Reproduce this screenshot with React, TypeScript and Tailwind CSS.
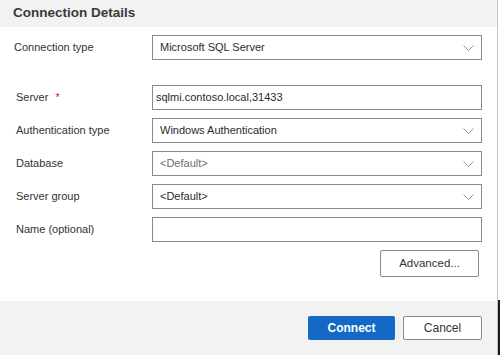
type Field = {
  label: string;
  value: string;
  select?: boolean;
  required?: boolean;
  muted?: boolean;
};

const fields: Field[] = [
  { label: 'Server', value: 'sqlmi.contoso.local,31433', required: true },
  { label: 'Authentication type', value: 'Windows Authentication', select: true },
  { label: 'Database', value: '<Default>', select: true, muted: true },
  { label: 'Server group', value: '<Default>', select: true },
  { label: 'Name (optional)', value: '' },
];

// thin dropdown caret
const Chevron = () => (
  <svg width="11" height="6" viewBox="0 0 11 6" className="mr-[7px]">
    <path d="M0.5 0.5 L5.5 5.5 L10.5 0.5" fill="none" stroke="#8c8c8c" strokeWidth="0.9" />
  </svg>
);

const Box = ({ value, select, muted }: { value: string; select?: boolean; muted?: boolean }) => (
  <div className="flex-1 h-[25px] border border-[#8a8a8a] bg-white flex items-center justify-between">
    <span className={`text-[11px] ${select ? 'pl-[7px]' : 'pl-[3px]'} ${muted ? 'text-[#6b6b6b]' : 'text-[#2b2b2b]'}`}>
      {value}
    </span>
    {select && <Chevron />}
  </div>
);

export default function App() {
  return (
    <div className="flex w-[500px] h-[355px] bg-white" style={{ fontFamily: '"Liberation Sans", Arial, sans-serif' }}>
      {/* dialog */}
      <div className="w-[497px] h-full flex flex-col">
        <div className="h-[27px] bg-[#f2f2f2] flex items-center pl-[13px]">
          <h2 className="text-[13.5px] font-bold text-[#3a3a3a]">Connection Details</h2>
        </div>

        <div className="flex-1 bg-white pl-[14px] pr-[15px] pt-[8px]">
          <div className="flex items-center">
            <div className="w-[138px] text-[11px] text-[#333]">Connection type</div>
            <Box value="Microsoft SQL Server" select />
          </div>

          <div className="flex flex-col gap-[8px] mt-[25px]">
            {fields.map(f => (
              <div key={f.label} className="flex items-center">
                <div className="w-[138px] pl-[2px] text-[11px] text-[#333]">
                  {f.label}
                  {f.required && <span className="text-[#e02020] ml-[7px]">*</span>}
                </div>
                <Box value={f.value} select={f.select} muted={f.muted} />
              </div>
            ))}
          </div>

          <div className="flex justify-end mt-[8px] pr-[3px]">
            <button className="w-[99px] h-[27px] border border-[#8a8a8a] rounded-[2px] bg-white text-[11.5px] text-[#333]">
              Advanced...
            </button>
          </div>
        </div>

        <div className="h-[54px] bg-[#f2f2f2] flex justify-end items-start gap-[8px] pt-[15px] pr-[15px]">
          <button className="w-[87px] h-[24px] rounded-[2px] bg-[#1469c7] text-white text-[12px] font-bold">
            Connect
          </button>
          <button className="w-[79px] h-[24px] rounded-[2px] border border-[#8a8a8a] bg-white text-[12px] text-[#333]">
            Cancel
          </button>
        </div>
      </div>

      {/* window edge */}
      <div className="w-px h-full bg-[#c4c4c4]" />
      <div className="w-[2px] h-full flex flex-col">
        <div className="h-[300px] bg-white" />
        <div className="flex-1 bg-[#1a1a1a]" />
      </div>
    </div>
  );
}
